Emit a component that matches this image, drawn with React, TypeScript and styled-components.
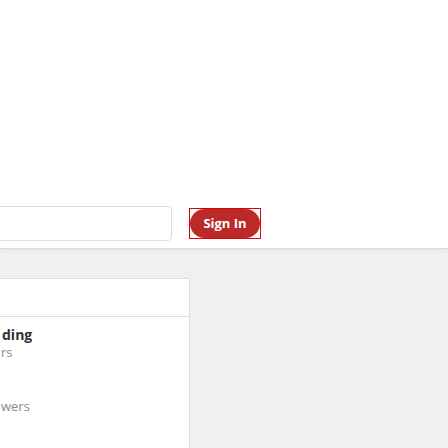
import React from "react";
import styled, { createGlobalStyle } from "styled-components";

const Global = createGlobalStyle`
  html, body { margin: 0; padding: 0; }
  body {
    background: #eff1f0;
    font-family: "Open Sans", "Liberation Sans", sans-serif;
    overflow: hidden;
  }
`;

const Page = styled.div`
  width: 448px;
  height: 448px;
  overflow: hidden;
  background: #eff1f0;
`;

const Header = styled.header`
  position: relative;
  z-index: 1;
  height: 249px;
  box-sizing: border-box;
  padding: 206px 0 8px;
  background: #fff;
  border-bottom: 1px solid #dcdcdc;
  box-shadow: 0 1px 5px rgba(0, 0, 0, 0.06);
  display: flex;
  align-items: center;
  gap: 17px;
`;

const SearchBox = styled.input`
  box-sizing: border-box;
  width: 200px;
  height: 35px;
  margin-left: -28px;
  border: 1px solid #dddddd;
  border-radius: 4px;
  background: #fff;
  outline: none;
  padding: 0 10px;
  font-family: inherit;
`;

const FocusFrame = styled.span`
  display: inline-flex;
  border: 1px solid #e00000;
  line-height: 0;
`;

const SignIn = styled.button`
  box-sizing: border-box;
  width: 70px;
  height: 29px;
  border: none;
  border-radius: 15px;
  background: #bb2a28;
  color: #fff;
  font-family: "Open Sans", "Liberation Sans", sans-serif;
  font-weight: 700;
  font-size: 13px;
  line-height: 29px;
  padding: 0;
  outline: none;
  cursor: pointer;
`;

const Main = styled.main`
  padding-top: 29px;
`;

const Card = styled.section`
  box-sizing: border-box;
  width: 230px;
  margin-left: -40px;
  height: 400px;
  background: #fff;
  border: 1px solid #dddddd;
`;

const CardHead = styled.div`
  height: 37px;
  border-bottom: 1px solid #dddddd;
`;

const List = styled.div`
  padding: 9px 0 0 40px;
  display: flex;
  flex-direction: column;
  gap: 20px;
`;

const Item = styled.div`
  display: flex;
  flex-direction: column;
`;

const Title = styled.div`
  font-size: 14px;
  line-height: 18px;
  font-weight: 700;
  color: #333;
  margin-left: 1px;
`;

const Sub = styled.div`
  font-size: 13px;
  line-height: 16px;
  color: #8a8a8a;
`;

export default function App() {
  return (
    <Page>
      <Global />
      <Header>
        <SearchBox aria-label="Search" />
        <FocusFrame>
          <SignIn>Sign In</SignIn>
        </FocusFrame>
      </Header>
      <Main>
        <Card>
          <CardHead />
          <List>
            <Item>
              <Title>ding</Title>
              <Sub>rs</Sub>
            </Item>
            <Item>
              <Title>&nbsp;</Title>
              <Sub>wers</Sub>
            </Item>
          </List>
        </Card>
      </Main>
    </Page>
  );
}
